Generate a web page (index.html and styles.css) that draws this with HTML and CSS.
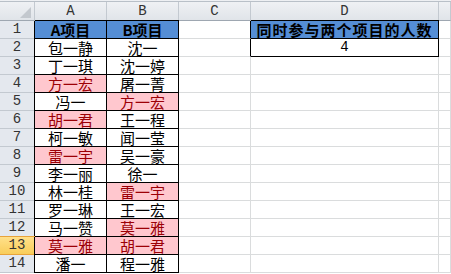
FILE: index.html
```html
<!DOCTYPE html>
<html lang="zh-CN">
<head>
<meta charset="utf-8">
<title>Sheet</title>
<link rel="stylesheet" href="styles.css">
</head>
<body>
<div class="strip"></div>
<div class="sheet">
  <div class="corner"><span class="tri"></span></div>
  <div class="ch">A</div>
  <div class="ch">B</div>
  <div class="ch">C</div>
  <div class="ch">D</div>
  <div class="ch"></div>

  <div class="rh">1</div>
  <div class="c t ta tt hd">A项目</div>
  <div class="c t tt hd">B项目</div>
  <div class="c cr"></div>
  <div class="c t tt hd wide">同时参与两个项目的人数</div>
  <div class="c"></div>

  <div class="rh">2</div>
  <div class="c t ta">包一静</div>
  <div class="c t">沈一</div>
  <div class="c cr"></div>
  <div class="c t num">4</div>
  <div class="c"></div>

  <div class="rh">3</div>
  <div class="c t ta">丁一琪</div>
  <div class="c t">沈一婷</div>
  <div class="c"></div>
  <div class="c"></div>
  <div class="c"></div>

  <div class="rh">4</div>
  <div class="c t ta red">方一宏</div>
  <div class="c t">屠一菁</div>
  <div class="c"></div>
  <div class="c"></div>
  <div class="c"></div>

  <div class="rh">5</div>
  <div class="c t ta">冯一</div>
  <div class="c t red">方一宏</div>
  <div class="c"></div>
  <div class="c"></div>
  <div class="c"></div>

  <div class="rh">6</div>
  <div class="c t ta red">胡一君</div>
  <div class="c t">王一程</div>
  <div class="c"></div>
  <div class="c"></div>
  <div class="c"></div>

  <div class="rh">7</div>
  <div class="c t ta">柯一敏</div>
  <div class="c t">闻一莹</div>
  <div class="c"></div>
  <div class="c"></div>
  <div class="c"></div>

  <div class="rh">8</div>
  <div class="c t ta red">雷一宇</div>
  <div class="c t">吴一豪</div>
  <div class="c"></div>
  <div class="c"></div>
  <div class="c"></div>

  <div class="rh">9</div>
  <div class="c t ta">李一丽</div>
  <div class="c t">徐一</div>
  <div class="c"></div>
  <div class="c"></div>
  <div class="c"></div>

  <div class="rh">10</div>
  <div class="c t ta">林一桂</div>
  <div class="c t red">雷一宇</div>
  <div class="c"></div>
  <div class="c"></div>
  <div class="c"></div>

  <div class="rh">11</div>
  <div class="c t ta">罗一琳</div>
  <div class="c t">王一宏</div>
  <div class="c"></div>
  <div class="c"></div>
  <div class="c"></div>

  <div class="rh">12</div>
  <div class="c t ta">马一赞</div>
  <div class="c t red">莫一雅</div>
  <div class="c"></div>
  <div class="c"></div>
  <div class="c"></div>

  <div class="rh sel">13</div>
  <div class="c t ta red">莫一雅</div>
  <div class="c t red">胡一君</div>
  <div class="c"></div>
  <div class="c"></div>
  <div class="c"></div>

  <div class="rh">14</div>
  <div class="c t ta">潘一</div>
  <div class="c t">程一雅</div>
  <div class="c"></div>
  <div class="c"></div>
  <div class="c"></div>
</div>
</body>
</html>
```
FILE: styles.css
```css
html, body {
  margin: 0;
  padding: 0;
  background: #ffffff;
  overflow: hidden;
}

.strip {
  height: 1px;
  background: #eef0f3;
  border-bottom: 1px solid #b9c0c8;
}

.sheet {
  display: grid;
  grid-template-columns: 35px 72px 72px 72px 188px 12px;
  grid-template-rows: 19px repeat(14, 18px);
  font-family: "Noto Sans CJK SC", "Noto Sans", sans-serif;
  font-size: 15px;
  color: #000;
}

.sheet > div {
  box-sizing: border-box;
}

.corner {
  position: relative;
  background: linear-gradient(#eff1f4, #e0e4e9);
  border-right: 1px solid #c3c9d0;
  border-bottom: 1px solid #9ea7b1;
}

.tri {
  position: absolute;
  right: 3px;
  bottom: 2px;
  width: 0;
  height: 0;
  border-left: 11px solid transparent;
  border-bottom: 11px solid #c3c8ce;
}

.ch {
  background: linear-gradient(#eff1f4, #e0e4e9);
  border-right: 1px solid #c3c9d0;
  border-bottom: 1px solid #9ea7b1;
  font-family: "Liberation Mono", monospace;
  font-size: 14px;
  color: #333;
  text-align: center;
  line-height: 18px;
}

.rh {
  background: #e4e8ee;
  border-right: 1px solid #9ea7b1;
  border-bottom: 1px solid #c3c9d0;
  font-family: "Liberation Mono", monospace;
  font-size: 14px;
  color: #333;
  text-align: center;
  line-height: 17px;
}

.rh.sel {
  background: linear-gradient(#ffe08a, #f9cd5a);
  border-right-color: #e8a33a;
  border-bottom-color: #e8a33a;
  box-shadow: 0 -1px 0 #e8a33a;
}

.c {
  border-right: 1px solid #dadcdd;
  border-bottom: 1px solid #dadcdd;
  text-align: center;
  line-height: 17px;
  white-space: nowrap;
}

.c.t {
  border-right-color: #000;
  border-bottom-color: #000;
}

.c.cr {
  border-right-color: #000;
}

.c.ta {
  box-shadow: -1px 0 0 #000;
}

.c.tt {
  box-shadow: 0 -1px 0 #000;
}

.c.ta.tt {
  box-shadow: -1px 0 0 #000, 0 -1px 0 #000, -1px -1px 0 #000;
}

.hd {
  background: #558ed5;
  font-weight: bold;
}

.wide {
  letter-spacing: 1px;
}

.num {
  font-family: "Liberation Mono", monospace;
  font-size: 14px;
}

.red {
  background: #ffc7ce;
  color: #9c0006;
}
```
